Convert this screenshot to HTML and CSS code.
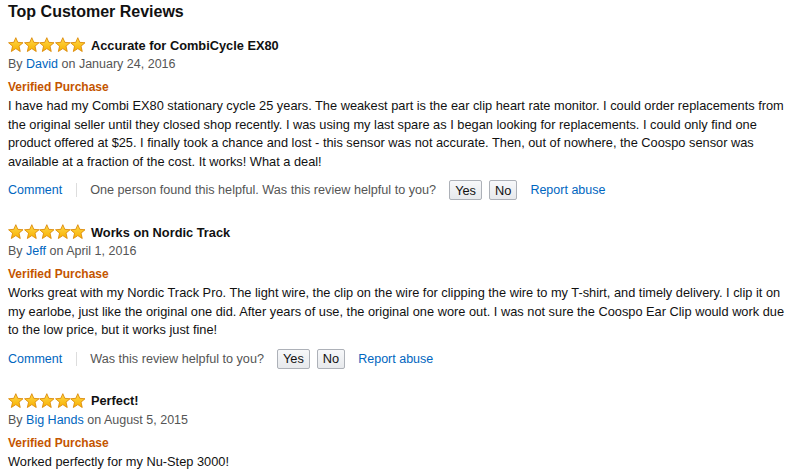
FILE: index.html
```html
<!DOCTYPE html>
<html>
<head>
<meta charset="utf-8">
<link rel="stylesheet" href="styles.css">
</head>
<body>
<svg width="0" height="0" class="defs">
  <defs>
    <linearGradient id="gold" x1="0" y1="0" x2="0" y2="1">
      <stop offset="0" stop-color="#ffd94a"/>
      <stop offset="1" stop-color="#f7b000"/>
    </linearGradient>
    <symbol id="star" viewBox="0 0 16 16">
      <path d="M8 0.7 L10.06 5.47 L15.42 5.89 L11.33 9.38 L12.58 14.9 L8 11.9 L3.42 14.9 L4.67 9.38 L0.58 5.89 L5.94 5.47 Z" fill="url(#gold)" stroke="#d98500" stroke-width="0.85" stroke-linejoin="round"/>
    </symbol>
  </defs>
</svg>
<h2 class="heading">Top Customer Reviews</h2>

<div class="review">
  <div class="review-head">
    <span class="stars"><svg><use href="#star"/></svg><svg><use href="#star"/></svg><svg><use href="#star"/></svg><svg><use href="#star"/></svg><svg><use href="#star"/></svg></span>
    <span class="review-title">Accurate for CombiCycle EX80</span>
  </div>
  <div class="byline">By <a class="link">David</a> on January 24, 2016</div>
  <div class="verified">Verified Purchase</div>
  <p class="body">I have had my Combi EX80 stationary cycle 25 years. The weakest part is the ear clip heart rate monitor. I could order replacements from the original seller until they closed shop recently. I was using my last spare as I began looking for replacements. I could only find one product offered at $25. I finally took a chance and lost - this sensor was not accurate. Then, out of nowhere, the Coospo sensor was available at a fraction of the cost. It works! What a deal!</p>
  <div class="actions">
    <a class="link">Comment</a>
    <span class="sep"></span>
    <span class="helpful">One person found this helpful. Was this review helpful to you?</span>
    <span class="btn yes">Yes</span>
    <span class="btn no">No</span>
    <a class="link report">Report abuse</a>
  </div>
</div>

<div class="review">
  <div class="review-head">
    <span class="stars"><svg><use href="#star"/></svg><svg><use href="#star"/></svg><svg><use href="#star"/></svg><svg><use href="#star"/></svg><svg><use href="#star"/></svg></span>
    <span class="review-title">Works on Nordic Track</span>
  </div>
  <div class="byline">By <a class="link">Jeff</a> on April 1, 2016</div>
  <div class="verified">Verified Purchase</div>
  <p class="body">Works great with my Nordic Track Pro. The light wire, the clip on the wire for clipping the wire to my T-shirt, and timely delivery. I clip it on my earlobe, just like the original one did. After years of use, the original one wore out. I was not sure the Coospo Ear Clip would work due to the low price, but it works just fine!</p>
  <div class="actions">
    <a class="link">Comment</a>
    <span class="sep"></span>
    <span class="helpful">Was this review helpful to you?</span>
    <span class="btn yes">Yes</span>
    <span class="btn no">No</span>
    <a class="link report">Report abuse</a>
  </div>
</div>

<div class="review">
  <div class="review-head">
    <span class="stars"><svg><use href="#star"/></svg><svg><use href="#star"/></svg><svg><use href="#star"/></svg><svg><use href="#star"/></svg><svg><use href="#star"/></svg></span>
    <span class="review-title">Perfect!</span>
  </div>
  <div class="byline">By <a class="link">Big Hands</a> on August 5, 2015</div>
  <div class="verified">Verified Purchase</div>
  <p class="body">Worked perfectly for my Nu-Step 3000!</p>
</div>
</body>
</html>
```

FILE: styles.css
```css
html, body {
  margin: 0;
  padding: 0;
  background: #ffffff;
}
body {
  padding: 0 0 0 8px;
  font-family: "Liberation Sans", Arial, sans-serif;
  font-size: 12.8px;
  color: #111111;
}
.defs {
  position: absolute;
  width: 0;
  height: 0;
}
.heading {
  margin: 0 0 11px 0;
  font-size: 16px;
  font-weight: bold;
  line-height: 24px;
  color: #111111;
}
.review {
  width: 779px;
  margin-bottom: 21px;
}
.review-head {
  display: flex;
  align-items: center;
  height: 20px;
}
.stars {
  display: flex;
  margin-right: 5px;
}
.stars svg {
  width: 15.6px;
  height: 15.6px;
  display: block;
}
.review-title {
  font-weight: bold;
  font-size: 12.8px;
  color: #111111;
}
.byline {
  line-height: 18px;
  font-size: 12.5px;
  color: #555555;
}
.link {
  color: #0066c0;
  text-decoration: none;
}
.verified {
  margin-top: 5px;
  line-height: 18px;
  color: #c45500;
  font-weight: bold;
  font-size: 12px;
}
.body {
  margin: 1px 0 0 0;
  line-height: 18.5px;
  color: #111111;
}
.actions {
  display: flex;
  align-items: center;
  height: 22px;
  margin-top: 8px;
  font-size: 12.5px;
  color: #555555;
}
.helpful {
  font-size: 12.65px;
}
.sep {
  width: 1px;
  height: 14px;
  background: #dddddd;
  margin: 0 13px 0 14px;
}
.btn {
  display: inline-flex;
  align-items: center;
  justify-content: center;
  height: 18px;
  padding: 0 5px;
  border: 1px solid #adb1b8;
  border-radius: 2px;
  background: linear-gradient(#f7f8fa, #e7e9ec);
  color: #111111;
  font-size: 12.8px;
}
.yes {
  margin-left: 13px;
}
.no {
  margin-left: 7px;
}
.report {
  margin-left: 13px;
}
```
